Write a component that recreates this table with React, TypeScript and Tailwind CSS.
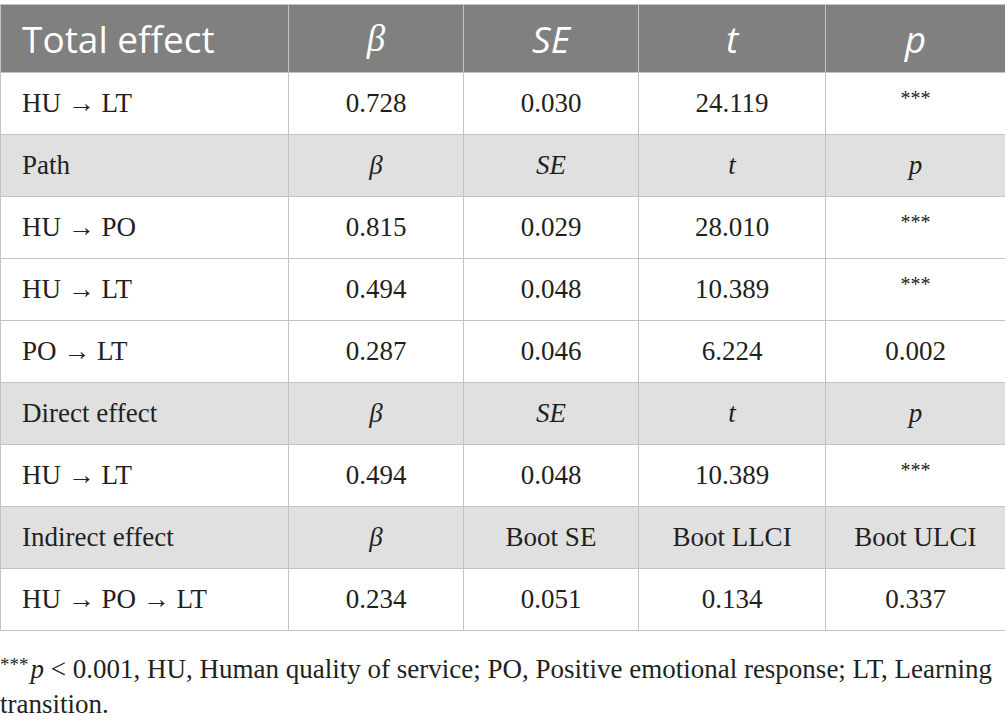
import React from "react";

const serif = "font-['Minion_Pro','Liberation_Serif',serif]";

interface Row {
  label: string;
  cells: string[];
  head?: boolean;
}

const rows: Row[] = [
  { label: "HU → LT", cells: ["0.728", "0.030", "24.119", "***"] },
  { label: "Path", cells: ["β", "SE", "t", "p"], head: true },
  { label: "HU → PO", cells: ["0.815", "0.029", "28.010", "***"] },
  { label: "HU → LT", cells: ["0.494", "0.048", "10.389", "***"] },
  { label: "PO → LT", cells: ["0.287", "0.046", "6.224", "0.002"] },
  { label: "Direct effect", cells: ["β", "SE", "t", "p"], head: true },
  { label: "HU → LT", cells: ["0.494", "0.048", "10.389", "***"] },
  { label: "Indirect effect", cells: ["β", "Boot SE", "Boot LLCI", "Boot ULCI"], head: true },
  { label: "HU → PO → LT", cells: ["0.234", "0.051", "0.134", "0.337"] },
];

const italicHeads = ["β", "SE", "t", "p"];

function Cell({ value }: { value: string }) {
  if (value === "***") {
    return <span className="relative -top-[7px] text-[20px]">***</span>;
  }
  if (italicHeads.includes(value)) {
    return <span className="italic">{value}</span>;
  }
  return <>{value}</>;
}

export default function App() {
  const widths = ["w-[288px]", "w-[175px]", "w-[175px]", "w-[187px]", "w-[180px]"];

  return (
    <div className={`w-[1005px] bg-white pt-[4px] ${serif} text-[#231f20]`}>
      <table className="w-[1005px] table-fixed border-collapse">
        <colgroup>
          {widths.map((w, i) => (
            <col key={i} className={w} />
          ))}
        </colgroup>
        <thead>
          <tr className="h-[68px] bg-[#808080] text-white font-['Open_Sans',sans-serif] text-[37px]">
            <th className="border border-[#c3c3c3] pl-[21px] text-left font-normal">Total effect</th>
            <th className={`border border-[#c3c3c3] text-center font-normal italic ${serif}`}>β</th>
            <th className="border border-[#c3c3c3] text-center font-normal italic">SE</th>
            <th className="border border-[#c3c3c3] text-center font-normal italic">t</th>
            <th className="border border-[#c3c3c3] text-center font-normal italic">p</th>
          </tr>
        </thead>
        <tbody className="text-[27px]">
          {rows.map((r, i) => (
            <tr key={i} className={`h-[62px] ${r.head ? "bg-[#e1e0e1]" : "bg-white"}`}>
              <td className="border border-[#c3c3c3] pl-[21px] text-left">{r.label}</td>
              {r.cells.map((c, j) => (
                <td key={j} className="border border-[#c3c3c3] text-center">
                  <Cell value={c} />
                </td>
              ))}
            </tr>
          ))}
        </tbody>
      </table>
      <p className="mt-[21px] text-[27px] leading-[35px]">
        <span className="mr-[2px] align-[7px] text-[19px] leading-none">***</span>
        <span className="italic">p</span> &lt; 0.001, HU, Human quality of service; PO, Positive emotional response; LT, Learning transition.
      </p>
    </div>
  );
}
